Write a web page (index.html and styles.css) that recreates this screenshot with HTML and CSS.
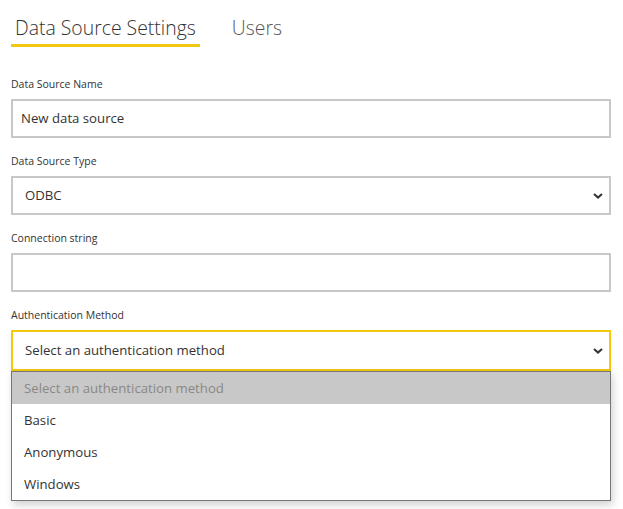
FILE: index.html
```html
<!DOCTYPE html>
<html>
<head>
<meta charset="utf-8">
<link rel="stylesheet" href="styles.css">
</head>
<body>
<div class="page">
  <nav class="tabs">
    <div class="tab active">Data Source Settings</div>
    <div class="tab">Users</div>
  </nav>
  <div class="form">
    <div class="field">
      <div class="label">Data Source Name</div>
      <div class="input">New data source</div>
    </div>
    <div class="field">
      <div class="label">Data Source Type</div>
      <div class="input select">
        <span>ODBC</span>
        <svg class="chev" width="10" height="6" viewBox="0 0 10 6"><path d="M1 1 L5 4.6 L9 1" fill="none" stroke="#333" stroke-width="2"/></svg>
      </div>
    </div>
    <div class="field">
      <div class="label">Connection string</div>
      <div class="input"></div>
    </div>
    <div class="field last">
      <div class="label">Authentication Method</div>
      <div class="input select focused">
        <span>Select an authentication method</span>
        <svg class="chev" width="10" height="6" viewBox="0 0 10 6"><path d="M1 1 L5 4.6 L9 1" fill="none" stroke="#333" stroke-width="2"/></svg>
      </div>
      <ul class="menu">
        <li class="opt placeholder">Select an authentication method</li>
        <li class="opt">Basic</li>
        <li class="opt">Anonymous</li>
        <li class="opt">Windows</li>
      </ul>
    </div>
  </div>
</div>
</body>
</html>
```
FILE: styles.css
```css
html, body {
  margin: 0;
  padding: 0;
  background: #fff;
}
body {
  font-family: "Open Sans", "Noto Sans", sans-serif;
  color: #252423;
}
.page {
  width: 623px;
  height: 509px;
  overflow: hidden;
  padding: 0 12px 0 11px;
  box-sizing: border-box;
}
.tabs {
  display: flex;
  gap: 28px;
  padding-top: 11px;
  height: 47px;
  box-sizing: border-box;
}
.tab {
  font-size: 19.4px;
  font-weight: 300;
  line-height: 33px;
  color: #555;
  padding: 0 4px;
}
.tab.active {
  color: #333;
  border-bottom: 3px solid #f2c811;
}
.form {
  padding-top: 29px;
}
.field {
  margin-bottom: 15px;
}
.label {
  font-size: 10.5px;
  line-height: 16px;
  color: #333;
  margin-bottom: 7px;
}
.input {
  height: 39px;
  box-sizing: border-box;
  border: 2px solid #c8c8c8;
  padding: 0 8px;
  font-size: 13.2px;
  line-height: 35px;
  color: #333;
}
.select {
  display: flex;
  align-items: center;
  justify-content: space-between;
  padding: 0 6px 0 12px;
}
.select .chev {
  display: block;
}
.focused {
  border-color: #f2c811;
  height: 41px;
  box-shadow: 0 4px 6px rgba(0,0,0,0.08);
}
.menu {
  list-style: none;
  margin: 0;
  padding: 0;
  border: 1px solid #767676;
  box-shadow: 2px 4px 8px rgba(0,0,0,0.18);
}
.opt {
  height: 32px;
  line-height: 33px;
  padding-left: 12px;
  font-size: 13.2px;
  color: #333;
}
.opt.placeholder {
  background: #c8c8c8;
  color: #8a8886;
}
```
